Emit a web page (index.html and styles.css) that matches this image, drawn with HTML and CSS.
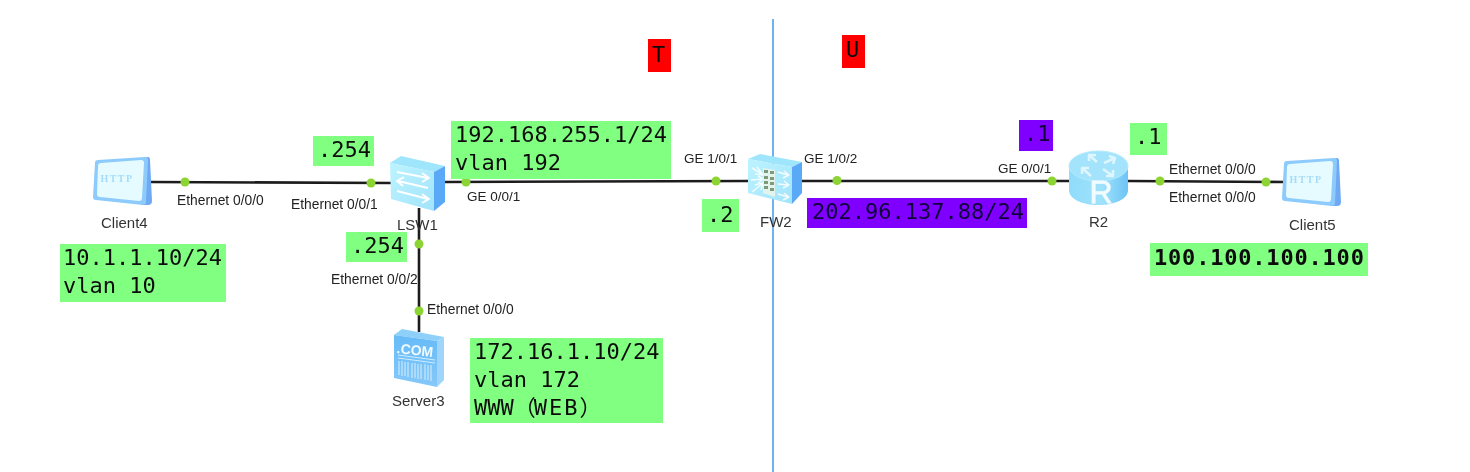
FILE: index.html
```html
<!DOCTYPE html>
<html lang="en">
<head>
<meta charset="utf-8">
<title>Network topology</title>
<link rel="stylesheet" href="styles.css">
</head>
<body>
<main class="stage">
  <svg class="canvas" width="1470" height="472" viewBox="0 0 1470 472" xmlns="http://www.w3.org/2000/svg">
    <defs>
      <linearGradient id="front" x1="0" y1="0" x2="1" y2="1">
        <stop offset="0" stop-color="#bdf3ff"/><stop offset="1" stop-color="#a2e4fb"/>
      </linearGradient>
      <linearGradient id="cyl" x1="0" y1="0" x2="1" y2="0">
        <stop offset="0" stop-color="#8fdcfb"/><stop offset="0.55" stop-color="#a0e2fb"/><stop offset="1" stop-color="#6cc4f6"/>
      </linearGradient>
      <linearGradient id="srv" x1="0" y1="0" x2="0" y2="1">
        <stop offset="0" stop-color="#66bbf7"/><stop offset="1" stop-color="#86c8fa"/>
      </linearGradient>
      <g id="client">
        <path class="cl-side" d="M143 158 L148 157 Q150 157 150 160 L152 201 Q152 205 148 205 L141 205 Z"/>
        <path class="cl-body" d="M98 160 L145 157 Q148 157 148 160 L146 202 Q146 205 143 205 L96 200 Q93 200 93 197 L95 163 Q95 160 98 160 Z"/>
        <path class="cl-screen" d="M101 163 L141 160 Q144 160 144 163 L142 198 Q142 201 139 201 L100 197 Q97 197 97 194 L98 166 Q98 163 101 163 Z"/>
        <text class="cl-text" x="117" y="182">HTTP</text>
      </g>
    </defs>

    <line class="divider" x1="773" y1="19" x2="773" y2="472"/>

    <path class="link" d="M150 182 L392 183"/>
    <path class="link" d="M445 182 L750 181"/>
    <path class="link" d="M800 181 L1070 181"/>
    <path class="link" d="M1128 181 L1285 182"/>
    <path class="link" d="M419 208 L419 332"/>

    <use href="#client"/>
    <use href="#client" x="1189" y="1"/>

    <!-- switch -->
    <path class="top" d="M390 163 L401 156 L445 166 L434 172 Z"/>
    <path class="face" d="M390 163 L434 172 L434 211 L391 199 Z"/>
    <path class="side" d="M434 172 L445 166 L445 202 L434 211 Z"/>
    <path class="arrow" d="M397 172 L428 178 M422 173 L429 178 L422 182"/>
    <path class="arrow" d="M428 188 L398 181 M404 177 L397 181 L403 186"/>
    <path class="arrow" d="M397 191 L428 199 M422 194 L429 199 L422 203"/>

    <!-- firewall -->
    <path class="top" d="M748 159 L760 154 L802 162 L792 167 Z"/>
    <path class="face" d="M748 159 L792 167 L792 204 L748 193 Z"/>
    <path class="side" d="M792 167 L802 162 L802 193 L792 204 Z"/>
    <path class="arrow thin soft" d="M752 168 L762 174 M757 167 L763 175 L755 174"/>
    <path class="arrow thin soft" d="M751 180 L763 179 M758 176 L763 179 L758 183"/>
    <path class="arrow thin soft" d="M752 192 L762 184 M755 185 L763 183 L761 190"/>
    <path class="arrow thin soft" d="M778 172 L788 175 M784 171 L789 175 L783 178"/>
    <path class="arrow thin soft" d="M778 184 L788 185 M784 181 L789 185 L783 188"/>
    <path class="arrow thin soft" d="M778 194 L788 197 M784 193 L789 197 L783 200"/>
    <path class="wall" d="M763 168 L775 170 L775 197 L763 193 Z"/>
    <path class="brick" d="M764 170 h4 v3 h-4 z M770 171 h4 v3 h-4 z M764 176 h4 v3 h-4 z M770 177 h4 v3 h-4 z M764 181 h4 v3 h-4 z M770 182 h4 v3 h-4 z M764 186 h4 v3 h-4 z M770 188 h4 v3 h-4 z"/>

    <!-- router -->
    <path class="cyl" d="M1069 166 L1069 190 C1069 199 1082 205 1098 205 C1115 205 1128 199 1128 190 L1128 166 Z"/>
    <ellipse class="cyl-top" cx="1098.500" cy="166" rx="29.500" ry="15"/>
    <path class="arrow star" d="M1089 155 L1097 162 M1089 161 L1089 155 L1096 155"/>
    <path class="arrow star" d="M1115 158 L1104 163 M1109 156 L1115 158 L1113 164"/>
    <path class="arrow star" d="M1091 176 L1082 168 M1082 174 L1082 168 L1089 168"/>
    <path class="arrow star" d="M1103 169 L1113 176 M1106 176 L1113 176 L1113 170"/>
    <text class="r-text" x="1101" y="203">R</text>

    <!-- server -->
    <path class="srv-top" d="M394 335 L402 329 L444 337 L437 341 Z"/>
    <path class="srv-face" d="M394 335 L437 341 L437 387 L394 378 Z"/>
    <path class="srv-side" d="M437 341 L444 337 L444 380 L437 387 Z"/>
    <text class="com-text" x="415" y="355" transform="rotate(6 415 350)">.COM</text>
    <path class="srv-line" d="M398 355 L435 360 M398 358 L435 363"/>
    <path class="srv-bars" d="M399 361 V375 M402 361 V376 M405 362 V376 M408 362 V377 M412 363 V378 M415 363 V378 M418 364 V379 M421 364 V379 M425 364 V380 M428 365 V380 M431 365 V381"/>

    <g class="dots">
      <circle cx="185" cy="182" r="4.500"/><circle cx="371" cy="183" r="4.500"/>
      <circle cx="466" cy="182" r="4.500"/><circle cx="716" cy="181" r="4.500"/>
      <circle cx="837" cy="180.500" r="4.500"/><circle cx="1052" cy="181" r="4.500"/>
      <circle cx="1160" cy="181" r="4.500"/><circle cx="1266" cy="182" r="4.500"/>
      <circle cx="419" cy="244" r="4.500"/><circle cx="419" cy="311" r="4.500"/>
    </g>
  </svg>

  <div class="note green n-254a">.254</div>
  <div class="note green n-client4">10.1.1.10/24<br>vlan 10</div>
  <div class="note green n-vlan192">192.168.255.1/24<br>vlan 192</div>
  <div class="note green n-254b">.254</div>
  <div class="note green n-server">172.16.1.10/24<br>vlan 172<br>WWW（<span class="web">WEB</span>）</div>
  <div class="note red n-t">T</div>
  <div class="note red n-u">U</div>
  <div class="note green n-2">.2</div>
  <div class="note purple n-202">202.96.137.88/24</div>
  <div class="note purple n-1p">.1</div>
  <div class="note green n-1g">.1</div>
  <div class="note green n-100">100.100.100.100</div>

  <span class="port eth p1">Ethernet 0/0/0</span>
  <span class="port eth p2">Ethernet 0/0/1</span>
  <span class="port p3">GE 0/0/1</span>
  <span class="port eth p4">Ethernet 0/0/2</span>
  <span class="port eth p5">Ethernet 0/0/0</span>
  <span class="port p6">GE 1/0/1</span>
  <span class="port p7">GE 1/0/2</span>
  <span class="port p8">GE 0/0/1</span>
  <span class="port eth p9">Ethernet 0/0/0</span>
  <span class="port eth p10">Ethernet 0/0/0</span>

  <span class="device d1">Client4</span>
  <span class="device d2">LSW1</span>
  <span class="device d3">Server3</span>
  <span class="device d4">FW2</span>
  <span class="device d5">R2</span>
  <span class="device d6">Client5</span>
</main>
</body>
</html>
```
FILE: styles.css
```css
html, body { margin: 0; padding: 0; background: #fff; }
.stage { position: relative; width: 1470px; height: 472px; overflow: hidden; background: #fff; filter: blur(0.4px); }
.canvas { position: absolute; left: 0; top: 0; display: block; }

.divider { stroke: #3e98e8; stroke-width: 1.5; }
.link { stroke: #1c1c1c; stroke-width: 2.6; fill: none; }
.dots circle { fill: #8cd433; }

.top { fill: #9fe6fd; }
.face { fill: url(#front); }
.side { fill: #5aa9f6; }
.arrow { fill: none; stroke: #fff; stroke-width: 2; stroke-linejoin: round; }
.arrow.thin { stroke-width: 1.5; }
.arrow.soft { opacity: 0.85; }
.arrow.star { stroke-width: 2.5; opacity: 0.65; }
.wall { fill: #e3f3ee; }
.brick { fill: #7e9a78; }

.cyl { fill: url(#cyl); }
.cyl-top { fill: #a3e4fc; stroke: #b4ebfe; stroke-width: 1; }
.r-text { font: 32px "Liberation Sans", Arial, sans-serif; fill: #f2fbff; stroke: #f2fbff; stroke-width: 0.8; text-anchor: middle; }

.cl-side { fill: #6fa9f4; }
.cl-body { fill: #8ccbfb; }
.cl-screen { fill: #e6fbff; }
.cl-text { font: bold 10px "Liberation Serif", serif; fill: #a6dcf6; text-anchor: middle; letter-spacing: 1.5px; }

.srv-top { fill: #8fd0fa; }
.srv-face { fill: url(#srv); }
.srv-side { fill: #9fd4fb; }
.com-text { font: bold 14px "Liberation Sans", Arial, sans-serif; fill: #f2fbff; text-anchor: middle; }
.srv-line { stroke: #cdeeff; stroke-width: 1; fill: none; }
.srv-bars { stroke: #d6f0ff; stroke-width: 1; fill: none; }

.note {
  position: absolute;
  box-sizing: border-box;
  padding-left: 4px;
  font-family: "DejaVu Sans Mono", "Noto Sans CJK SC", monospace;
  font-size: 22px;
  line-height: 28px;
  color: #0c0c0c;
  white-space: nowrap;
}
.green { background: #80ff80; }
.red { background: #ff0000; }
.purple { background: #7f00ff; color: #10003a; }
.web { letter-spacing: 2px; margin-left: -2px; }

.n-254a { left: 313px; top: 136px; width: 61px; height: 30px; padding-left: 5px; }
.n-client4 { left: 60px; top: 244px; width: 166px; height: 58px; padding-left: 3px; }
.n-vlan192 { left: 451px; top: 121px; width: 220px; height: 58px; }
.n-254b { left: 346px; top: 232px; width: 61px; height: 30px; padding-left: 5px; }
.n-server { left: 470px; top: 338px; width: 193px; height: 85px; }
.n-t { left: 648px; top: 39px; width: 23px; height: 33px; line-height: 32px; }
.n-u { left: 842px; top: 35px; width: 23px; height: 33px; line-height: 29px; }
.n-2 { left: 702px; top: 199px; width: 37px; height: 33px; line-height: 32px; padding-left: 5px; }
.n-202 { left: 807px; top: 198px; width: 220px; height: 30px; padding-left: 5px; }
.n-1p { left: 1019px; top: 120px; width: 34px; height: 31px; padding-left: 5px; }
.n-1g { left: 1130px; top: 123px; width: 37px; height: 32px; padding-left: 5px; }
.n-100 { left: 1150px; top: 243px; width: 218px; height: 33px; line-height: 30px; font-weight: 700; padding-left: 4px; letter-spacing: 0.8px; }

.port, .device {
  position: absolute;
  font-family: "Liberation Sans", Arial, sans-serif;
  color: #222;
  white-space: nowrap;
}
.port { font-size: 13.500px; line-height: 16px; }
.port.eth { font-size: 13.800px; padding-top: 1px; }
.device { font-size: 15px; line-height: 18px; color: #333; }

.p1 { left: 177px; top: 192px; }
.p2 { left: 291px; top: 196px; }
.p3 { left: 467px; top: 189px; }
.p4 { left: 331px; top: 271px; }
.p5 { left: 427px; top: 301px; }
.p6 { left: 684px; top: 151px; }
.p7 { left: 804px; top: 151px; }
.p8 { left: 998px; top: 161px; }
.p9 { left: 1169px; top: 161px; }
.p10 { left: 1169px; top: 189px; }

.d1 { left: 101px; top: 214px; }
.d2 { left: 397px; top: 216px; }
.d3 { left: 392px; top: 392px; }
.d4 { left: 760px; top: 213px; }
.d5 { left: 1089px; top: 213px; }
.d6 { left: 1289px; top: 216px; }
```
